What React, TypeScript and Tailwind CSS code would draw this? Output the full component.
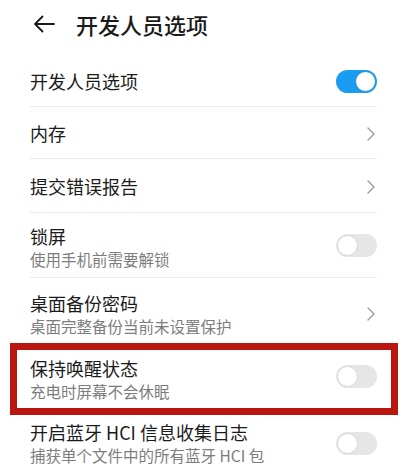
import React from "react";

const font = { fontFamily: '"Noto Sans CJK SC", "Noto Sans", sans-serif' };

function ToggleOn() {
  return (
    <div className="relative w-[41px] h-[23px] rounded-full bg-[#1a9cf0] shrink-0">
      <div className="absolute right-[1px] top-[1px] w-[21px] h-[21px] rounded-full bg-white border-[1.5px] border-[#1a8fdc]" />
    </div>
  );
}

function ToggleOff() {
  return (
    <div className="relative w-[41px] h-[23px] rounded-full bg-[#e6e6e6] shrink-0">
      <div className="absolute left-[1px] top-[1px] w-[21px] h-[21px] rounded-full bg-white border border-[#d8d8d8]" />
    </div>
  );
}

function Chevron() {
  return (
    <svg width="10" height="16" viewBox="0 0 10 16" className="shrink-0 mr-[1px]">
      <path d="M2 2 L8 8 L2 14" fill="none" stroke="#9b9b9b" strokeWidth="1.4" strokeLinecap="round" strokeLinejoin="round" />
    </svg>
  );
}

function TwoLine({ title, sub }: { title: string; sub: string }) {
  return (
    <div className="flex flex-col">
      <div className="text-[18px] leading-[24px] text-[#1b1b1b]">{title}</div>
      <div className="text-[15.5px] leading-[22px] text-[#7d7d7d]">{sub}</div>
    </div>
  );
}

export default function App() {
  return (
    <div className="w-[404px] h-[473px] overflow-hidden bg-white" style={font}>
      {/* Header */}
      <div className="h-[48px] flex items-center pl-[33px]">
        <svg width="22" height="18" viewBox="0 0 22 18" className="shrink-0">
          <path d="M21 9 H2 M9.5 1.5 L2 9 L9.5 16.5" fill="none" stroke="#1b1b1b" strokeWidth="1.8" strokeLinecap="round" strokeLinejoin="round" />
        </svg>
        <div className="ml-[21px] text-[22px] leading-[28px] text-[#1b1b1b] font-medium">开发人员选项</div>
      </div>

      <div className="pl-[30px] pr-[27px]">
        <div className="h-[59px] pt-[8px] flex items-center justify-between border-b border-[#ebebeb]">
          <div className="text-[18px] text-[#1b1b1b]">开发人员选项</div>
          <ToggleOn />
        </div>
        <div className="h-[52px] pt-[2px] flex items-center justify-between border-b border-[#ebebeb]">
          <div className="text-[18px] text-[#1b1b1b]">内存</div>
          <Chevron />
        </div>
        <div className="h-[54px] pt-[2px] flex items-center justify-between border-b border-[#ebebeb]">
          <div className="text-[18px] text-[#1b1b1b]">提交错误报告</div>
          <Chevron />
        </div>
        <div className="h-[65px] pt-[3px] flex items-center justify-between border-b border-[#ebebeb]">
          <TwoLine title="锁屏" sub="使用手机前需要解锁" />
          <div className="mt-[-3px]">
            <ToggleOff />
          </div>
        </div>
        <div className="h-[65px] pt-[6px] flex items-center justify-between">
          <TwoLine title="桌面备份密码" sub="桌面完整备份当前未设置保护" />
          <Chevron />
        </div>
      </div>

      <div className="mx-[10px] w-[388px] h-[72px] border-[7px] border-[#b8160e] pl-[13px] pr-[14px] flex items-center justify-between">
        <TwoLine title="保持唤醒状态" sub="充电时屏幕不会休眠" />
        <div className="mt-[-5px]">
          <ToggleOff />
        </div>
      </div>

      <div className="pl-[30px] pr-[27px] pt-[5px] flex items-center justify-between">
        <TwoLine title="开启蓝牙 HCI 信息收集日志" sub="捕获单个文件中的所有蓝牙 HCI 包" />
        <ToggleOff />
      </div>
    </div>
  );
}
